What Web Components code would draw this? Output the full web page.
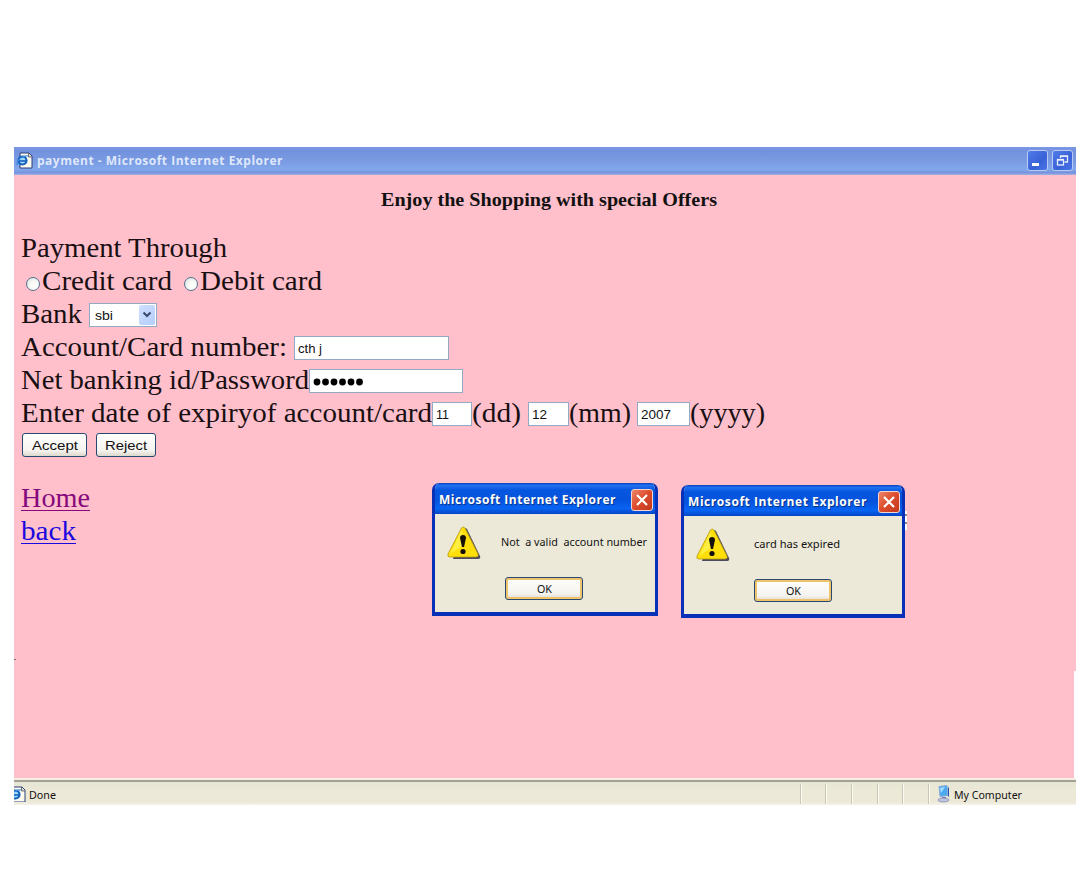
<!DOCTYPE html>
<html lang="en"><head><meta charset="utf-8"><title>payment - Microsoft Internet Explorer</title>
<style>
html,body{margin:0;background:#fff}
body{width:1080px;height:875px;overflow:hidden;font-family:"Liberation Serif",serif;color:#180f12}
</style></head><body>
<xp-browser>
  <fit-text slot="title" w="246" track>payment - Microsoft Internet Explorer</fit-text>
  <payment-page></payment-page>
</xp-browser>
<script>
const define=(name,html,init)=>customElements.define(name,class extends HTMLElement{
  constructor(){super();this.attachShadow({mode:'open'}).innerHTML=html;}
  connectedCallback(){if(init)init(this,this.shadowRoot);}
});

define('page-icon',`<style>:host{display:block;width:17px;height:17px}svg{display:block}</style>
<svg width="17" height="17" viewBox="0 0 17 17"><path d="M4 1h9l3 3v12H4z" fill="#fffdf0" stroke="#2b3d78"/><path d="M12.500 1v4H16" fill="#d9d9c8" stroke="#4b5262" stroke-width=".8"/><circle cx="6.500" cy="8.500" r="4" fill="#9edcff" stroke="#1560bd" stroke-width="2.200"/><path d="M3 9h7" stroke="#1560bd" stroke-width="1.600"/><path d="M1 13C0 9 6 3 12 4" fill="none" stroke="#3a8ce0" stroke-width="1.200"/></svg>`);

define('caption-button',`<style>:host{display:flex;align-items:center;justify-content:center;box-sizing:border-box;width:21px;height:21px;border:1px solid #b9cbf5;border-radius:3px;background:linear-gradient(135deg,#4f7be6,#3a62d8 60%,#4a77e8)}</style><slot></slot>`);

define('xp-browser',`<style>
:host{display:flex;flex-direction:column;margin:147px 0 0 14px;width:1062px;height:658px}
header{display:flex;align-items:center;height:28px;box-sizing:border-box;padding:0 3px 0 2px;background:linear-gradient(#7b98e4 0,#7292df 15%,#7a9ae2 50%,#82a8ec 80%,#7592dc 92%,#a9b2e4 100%);color:#dfe8fb;font:bold 12px "Open Sans","Noto Sans",sans-serif}
slot[name=title]::slotted(*){margin-top:-1px}
page-icon{margin:-2px 4px 0 0}
.gap{flex:1}
caption-button{margin:-2px 0 0 4px}
main{flex:1;background:linear-gradient(#fff,#fff) 1060px 496px/2px 200px no-repeat #ffbfcb;color:#180f12;min-height:0}
footer{display:flex;align-items:center;height:25px;box-sizing:border-box;border-top:2px solid #a3a192;background:linear-gradient(#e6e4d2,#ece9d8 40%,#ebe8d7 85%,#f5f3e9);box-shadow:0 -2px #f4eee7;font:11.500px "Noto Sans",sans-serif;color:#111}
footer fit-text{margin-top:2px}
.clip{width:12px;overflow:hidden;height:16px}.clip page-icon{margin:0 0 0 -5px}
.cells{display:flex;margin-left:auto}
i{width:24.700px;height:20px;border-left:1px solid #c9c6b4;box-shadow:inset 1px 0 #fbfaf3}
.pc{margin:0 4px 0 6px}
.end{width:54px}
</style>
<header><page-icon></page-icon><slot name="title"></slot><span class="gap"></span>
<caption-button><svg width="13" height="13"><rect x="1" y="9" width="7" height="3" fill="#fff"/></svg></caption-button>
<caption-button><svg width="13" height="13" fill="none" stroke="#e9efff" stroke-width="1.300"><path d="M4.500 4V2h7v6h-3M4 2.300h8" /><rect x="1.500" y="5.500" width="6" height="5.500"/><path d="M1 6h7"/></svg></caption-button></header>
<main><slot></slot></main>
<footer><div class="clip"><page-icon></page-icon></div><fit-text w="27" style="margin-left:3px">Done</fit-text>
<div class="cells"><i></i><i></i><i></i><i></i><i></i><i style="width:1px"></i></div>
<svg class="pc" width="14" height="18"><path d="M3 1.500l8-1 1 10-8 1z" fill="#4ba9f0" stroke="#8eabd6"/><path d="M4 3l5-1-4 6z" fill="#a5e0ff"/><path d="M12 2l1 1v8l-1 1z" fill="#284dab"/><path d="M6 12h4v2H6z" fill="#7379b5"/><ellipse cx="7.500" cy="15" rx="5.500" ry="2" fill="#bfc4dc" stroke="#7d83b0" stroke-width=".7"/></svg>
<fit-text w="68">My Computer</fit-text><span class="end"></span></footer>`);

define('xp-field',`<style>:host{display:flex;align-items:center;box-sizing:border-box;height:24px;margin-top:6px;padding:1px 0 0 3px;border:1px solid #94a9c4;background:#fff;color:#111;font:13px "Liberation Sans",sans-serif;flex:none}</style><slot></slot>`,el=>el.style.width=el.getAttribute('w')+'px');

define('xp-select',`<style>:host{display:flex;align-items:center;box-sizing:border-box;width:68px;height:24px;margin-top:6px;padding:0 1px 0 5px;border:1px solid #94a9c4;background:#fff;color:#111;font:13px "Liberation Sans",sans-serif;justify-content:space-between}
b{display:flex;align-items:center;justify-content:center;width:16px;height:20px;border-radius:2px;background:linear-gradient(135deg,#cfe0ff,#b4cdfb)}</style><slot></slot><b><svg width="10" height="8"><path d="M1.500 1.500L5 5l3.500-3.500" fill="none" stroke="#3c4d70" stroke-width="2.200"/></svg></b>`);

define('xp-radio',`<style>:host{display:block;width:14px;height:14px;box-sizing:border-box;border:1px solid #55708f;border-radius:50%;background:radial-gradient(circle at 65% 65%,#fff,#f5f8f3 45%,#cddbd9);margin-top:13px}</style>`);

define('xp-button',`<style>:host{display:flex;align-items:center;justify-content:center;box-sizing:border-box;height:24px;border:1px solid #28496f;border-radius:3px;background:linear-gradient(#fff,#f4f3ee 75%,#dcd8cc);color:#111;font:13.500px "Liberation Sans",sans-serif}
:host([focus]){height:23px;margin-top:1px;box-shadow:inset 0 0 0 2px #eec36c,inset 0 2px #f9dfab;font:11.500px "Noto Sans",sans-serif}</style><slot></slot>`,el=>el.style.width=el.getAttribute('w')+'px');

define('form-row',`<style>:host{display:flex;height:33px;line-height:33px;align-items:flex-start}</style><slot></slot>`);

define('xp-dialog',`<style>
:host{position:absolute;display:flex;flex-direction:column;box-sizing:border-box;height:133px;background:#ece9d8;border:solid #0831b8;border-width:0 3px 4px;border-radius:7px 7px 0 0;overflow:hidden}
header{display:flex;align-items:center;height:31px;flex:none;margin:0 -3px;padding:2px 5px 0 7px;box-sizing:border-box;justify-content:space-between;background:linear-gradient(#0743bd 0,#2271f0 8%,#0756df 22%,#0553dd 55%,#0864f2 82%,#0545c6 100%);color:#fff;font:bold 12px "Open Sans","Noto Sans",sans-serif;text-shadow:1px 1px #073487}
.x{display:flex;align-items:center;justify-content:center;width:22px;height:22px;box-sizing:border-box;border:1px solid #f4d5d0;border-radius:3px;background:linear-gradient(135deg,#ed8667,#dc4a2b 50%,#c23a20)}
.body{display:flex;height:62px;padding:12px 0 0 12px;box-sizing:border-box;font:11.500px "Noto Sans",sans-serif;color:#111}
.msg{line-height:16px;margin-top:8px}
.foot{display:flex;flex:1;align-items:flex-start}
</style><header><slot name="title"></slot><span class="x"><svg width="14" height="14"><path d="M2 2l10 10M12 2L2 12" stroke="#fff" stroke-width="2.200"/></svg></span></header>
<div class="body"><svg width="34" height="34"><path d="M16 3q2-2 4 0l13 27q1 3-2 3H6z" fill="#4a4a5c"/><path d="M14.500 2q1.500-2 3.500 0l13 26q1 3-2 3H3q-3 0-2-3z" fill="#ffdf0a" stroke="#b8980d" stroke-width=".8"/><path d="M15 3L3 28l12-8z" fill="#fff35a" opacity=".7"/><path d="M13 12q0-3 3-3t3 3l-2 9h-2z" fill="#15110a"/><circle cx="16" cy="25.500" r="2.600" fill="#15110a"/></svg><div class="msg"><slot name="message"></slot></div></div>
<div class="foot"><xp-button focus w="78"><fit-text w="15">OK</fit-text></xp-button></div>`,(el,r)=>{
 for(const k of ['left','top','width'])el.style[k]=el.getAttribute(k)+'px';
 r.querySelector('.msg').style.marginLeft=el.getAttribute('indent')+'px';
 r.querySelector('xp-button').style.marginLeft='70px';
});

define('payment-page',`<style>
:host{display:block;font-size:28px;padding:12px 7px 0}
h1{margin:0;display:flex;height:26px;line-height:26px;font-size:19px;padding-left:360px;color:#111}
.form{padding-top:18px}
.buttons{display:flex;gap:9px;padding:4px 0 0 1px;height:48px;box-sizing:border-box}
a{display:block;height:29px;border-bottom:1.500px solid}
.home{color:#86087d}.back{color:#1b08df}
.under{position:absolute;left:903px;top:511px;width:4px;height:19px;background:repeating-linear-gradient(#fff 0 3px,#8e8490 3px 5px,#fff 5px 8px)}
.speck{position:absolute;left:14px;top:659px;width:2px;height:1px;background:#7f6873}
</style>
<h1><fit-text w="336">Enjoy the Shopping with special Offers</fit-text></h1>
<div class="form">
<form-row><fit-text w="206">Payment Through</fit-text></form-row>
<form-row><xp-radio style="margin-left:5px"></xp-radio><fit-text w="130" style="margin-left:2px">Credit card</fit-text><xp-radio style="margin-left:12px"></xp-radio><fit-text w="122" style="margin-left:2px">Debit card</fit-text></form-row>
<form-row><fit-text w="61">Bank</fit-text><xp-select style="margin-left:7px"><fit-text w="18">sbi</fit-text></xp-select></form-row>
<form-row><fit-text w="266">Account/Card number:</fit-text><xp-field w="155" style="margin-left:7px"><fit-text w="24">cth j</fit-text></xp-field></form-row>
<form-row><fit-text w="288">Net banking id/Password</fit-text><xp-field w="154"><svg width="52" height="10"><g fill="#000"><circle cx="4" cy="5" r="3.400"/><circle cx="12.500" cy="5" r="3.400"/><circle cx="21" cy="5" r="3.400"/><circle cx="29.500" cy="5" r="3.400"/><circle cx="38" cy="5" r="3.400"/><circle cx="46.500" cy="5" r="3.400"/></g></svg></xp-field></form-row>
<form-row><fit-text w="411">Enter date of expiryof account/card</fit-text><xp-field w="40"><fit-text w="13">11</fit-text></xp-field><fit-text w="49">(dd)</fit-text><xp-field w="41" style="margin-left:7px"><fit-text w="15">12</fit-text></xp-field><fit-text w="62">(mm)</fit-text><xp-field w="53" style="margin-left:6px"><fit-text w="30">2007</fit-text></xp-field><fit-text w="75">(yyyy)</fit-text></form-row>
</div>
<div class="buttons"><xp-button w="65"><fit-text w="46">Accept</fit-text></xp-button><xp-button w="60"><fit-text w="42">Reject</fit-text></xp-button></div>
<form-row style="margin-top:4px"><a class="home"><fit-text w="69">Home</fit-text></a></form-row>
<form-row><a class="back"><fit-text w="55">back</fit-text></a></form-row>
<span class="speck"></span><span class="under"></span>
<xp-dialog left="432" top="483" width="226" indent="20"><fit-text slot="title" w="177" track>Microsoft Internet Explorer</fit-text><fit-text slot="message" w="146">Not  a valid  account number</fit-text></xp-dialog>
<xp-dialog left="681" top="485" width="224" indent="24"><fit-text slot="title" w="179" track>Microsoft Internet Explorer</fit-text><fit-text slot="message" w="86">card has expired</fit-text></xp-dialog>`);

/* Text set to a given advance width, by tracking or by widening its glyphs.
   Defined last, so that the fonts around it are already in place when it measures. */
define('fit-text',`<style>:host{display:inline-block;white-space:pre;flex:none}span{display:inline-block;white-space:pre;transform-origin:0 50%}</style><span><slot></slot></span>`,(el,root)=>{
  const w=+el.getAttribute('w'),s=root.querySelector('span');
  const n=s.getBoundingClientRect().width;
  if(el.hasAttribute('track'))s.style.letterSpacing=((w-n)/el.textContent.length)+'px';
  else s.style.transform='scaleX('+w/n+')';
  el.style.width=w+'px';
});
</script></body></html>
